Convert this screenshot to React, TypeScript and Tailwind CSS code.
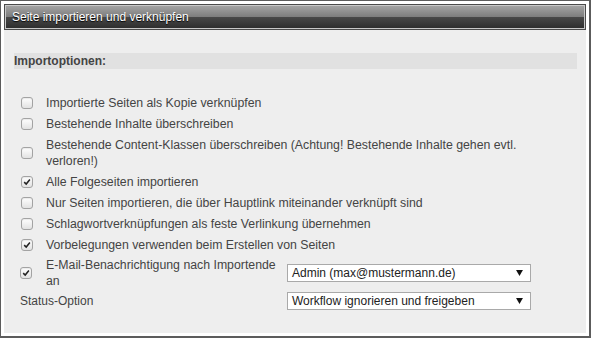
import type { ReactNode } from 'react'

function Checkbox({ checked }: { checked?: boolean }) {
  return (
    <span className="grid h-3 w-3 shrink-0 place-items-center rounded-[3px] border border-[#a3a3a3] bg-gradient-to-b from-white to-[#e2e2e2] shadow-[inset_0_1px_1px_rgba(0,0,0,0.08)]">
      {checked && (
        <svg viewBox="0 0 10 10" className="h-[8px] w-[8px]">
          <path d="M1.5 5.2 L4 7.6 L8.6 2" fill="none" stroke="#222" strokeWidth="1.9" />
        </svg>
      )}
    </span>
  )
}

function Row({ checked, children }: { checked?: boolean; children: ReactNode }) {
  return (
    <div className="ml-[7px] flex items-center gap-[13px] py-[2.5px]">
      <Checkbox checked={checked} />
      <span className="max-w-[490px] text-[12.3px] leading-4">{children}</span>
    </div>
  )
}

function FakeSelect({ value }: { value: string }) {
  return (
    <div className="flex h-[18px] w-[244px] items-center justify-between border border-[#a9a9a9] bg-white pl-[4px] pr-[7px] text-[#222]">
      <span className="leading-4">{value}</span>
      <svg viewBox="0 0 8 7" className="h-[6px] w-[7px]">
        <path d="M0 0 H8 L4 7 Z" fill="#111" />
      </svg>
    </div>
  )
}

const options = [
  { label: 'Importierte Seiten als Kopie verknüpfen', checked: false },
  { label: 'Bestehende Inhalte überschreiben', checked: false },
  {
    label: 'Bestehende Content-Klassen überschreiben (Achtung! Bestehende Inhalte gehen evtl. verloren!)',
    checked: false,
  },
  { label: 'Alle Folgeseiten importieren', checked: true },
  { label: 'Nur Seiten importieren, die über Hauptlink miteinander verknüpft sind', checked: false },
  { label: 'Schlagwortverknüpfungen als feste Verlinkung übernehmen', checked: false },
  { label: 'Vorbelegungen verwenden beim Erstellen von Seiten', checked: true },
]

export default function App() {
  return (
    <div
      className="h-[338px] w-[591px] border-t border-r-2 border-b-2 border-l border-[#5c5c5c] bg-white p-[3px] text-[12px] text-[#444]"
      style={{ fontFamily: '"Liberation Sans", Arial, sans-serif' }}
    >
      <div className="flex h-full flex-col bg-[#eeeeee]">
        {/* title bar */}
        <div className="flex h-[26px] shrink-0 items-center border border-[#4a4a4a] bg-[linear-gradient(to_bottom,#a6a6a6_0%,#7e7e7e_48%,#474747_52%,#2c2c2c_100%)] pl-[7px] shadow-[inset_0_0_0_1px_#c8c8c8]">
          <span className="text-white [text-shadow:0_1px_1px_#000]">Seite importieren und verknüpfen</span>
        </div>

        {/* content */}
        <div className="flex flex-col pt-[23px] pr-[9px] pl-[10px]">
          <div className="h-4 bg-[#e1e1e1] font-bold leading-4 text-[#444]">Importoptionen:</div>

          <div className="mt-[23px] flex flex-col">
            {options.map((o) => (
              <Row key={o.label} checked={o.checked}>
                {o.label}
              </Row>
            ))}
          </div>

          <div className="ml-[6px] flex flex-col">
            <div className="flex items-center py-[2px]">
              <div className="flex w-[267px] items-center gap-[14px]">
                <Checkbox checked />
                <span className="w-[236px] text-[12.3px] leading-4">E-Mail-Benachrichtigung nach Importende an</span>
              </div>
              <FakeSelect value="Admin (max@mustermann.de)" />
            </div>
            <div className="flex items-center py-px">
              <div className="w-[267px] leading-4">Status-Option</div>
              <FakeSelect value="Workflow ignorieren und freigeben" />
            </div>
          </div>
        </div>
      </div>
    </div>
  )
}
